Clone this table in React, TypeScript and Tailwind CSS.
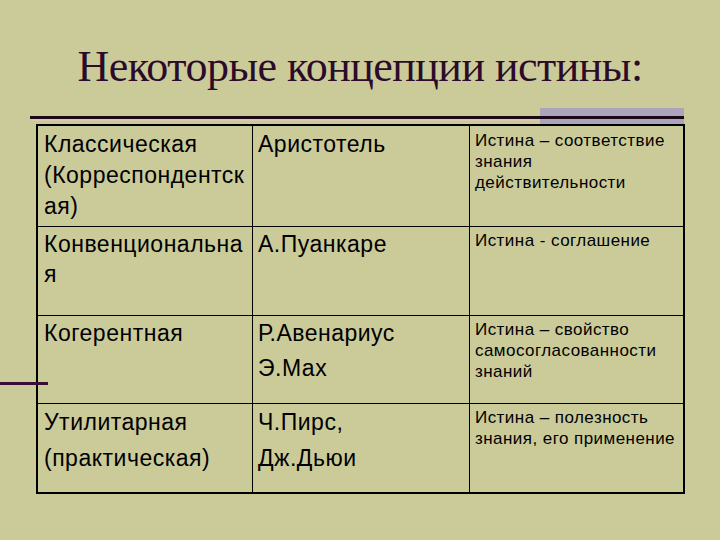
import React from 'react';

const sans = { fontFamily: '"Liberation Sans", Arial, sans-serif' };

type Row = {
  h: string;
  concept: React.ReactNode;
  author: React.ReactNode;
  def: React.ReactNode;
  lead: string;
  pt: string;
  defPt: string;
};

const rows: Row[] = [
  {
    h: 'h-[100px]',
    concept: (<>Классическая<br />(Корреспондентск<br />ая)</>),
    author: 'Аристотель',
    def: (<>Истина – соответствие<br />знания<br />действительности</>),
    lead: 'leading-[31px]',
    pt: 'pt-[3px]',
    defPt: 'pt-[4px]',
  },
  {
    h: 'h-[89px]',
    concept: (<>Конвенциональна<br />я</>),
    author: 'А.Пуанкаре',
    def: 'Истина - соглашение',
    lead: 'leading-[30px]',
    pt: 'pt-[2px]',
    defPt: 'pt-[3px]',
  },
  {
    h: 'h-[88px]',
    concept: 'Когерентная',
    author: (<>Р.Авенариус<br />Э.Мах</>),
    def: (<>Истина – свойство<br />самосогласованности<br />знаний</>),
    lead: 'leading-[35px]',
    pt: 'pt-[0px]',
    defPt: 'pt-[3px]',
  },
  {
    h: 'h-[89px]',
    concept: (<>Утилитарная<br />(практическая)</>),
    author: (<>Ч.Пирс,<br />Дж.Дьюи</>),
    def: (<>Истина – полезность<br />знания, его применение</>),
    lead: 'leading-[36px]',
    pt: 'pt-[0px]',
    defPt: 'pt-[3px]',
  },
];

export default function App() {
  return (
    <div className="relative w-[720px] h-[540px] overflow-hidden bg-[#cbcb9a]">
      {/* decorative accents */}
      <div className="absolute left-0 top-[382px] w-[48px] h-[3px] bg-[#3a0f35]" />

      <h1
        className="pt-[45px] h-[89px] text-center text-[44px] leading-[44px] text-[#2c0b2a] tracking-[-0.5px]"
        style={{ fontFamily: '"Liberation Serif", "Times New Roman", serif' }}
      >
        Некоторые концепции истины:
      </h1>

      <div className="relative mt-[19px] ml-[30px] w-[654px] h-[16px]">
        <div className="absolute right-0 top-0 w-[144px] h-[16px] bg-[#aba4ba]" />
        <div className="absolute left-0 top-[8px] w-[654px] h-[3px] bg-[#1a0a18]" />
        <div className="absolute left-0 top-[11px] w-[510px] h-[2px] bg-[#dcc8a6]" />
      </div>

      <div className="ml-[36px] w-[649px] border-2 border-black text-black" style={sans}>
        {rows.map((r, i) => (
          <div key={i} className={`flex ${r.h} ${i > 0 ? 'border-t border-black' : ''}`}>
            <div className={`w-[214px] pl-[6px] text-[23px] tracking-[0.5px] whitespace-nowrap ${r.lead} ${r.pt}`}>
              {r.concept}
            </div>
            <div
              className={`w-[217px] border-l border-black pl-[5px] text-[23px] tracking-[0.5px] whitespace-nowrap ${r.lead} ${r.pt}`}
            >
              {r.author}
            </div>
            <div
              className={`flex-1 border-l border-black pl-[5px] text-[17px] leading-[21px] tracking-[0.45px] whitespace-nowrap ${r.defPt}`}
            >
              {r.def}
            </div>
          </div>
        ))}
      </div>
    </div>
  );
}
